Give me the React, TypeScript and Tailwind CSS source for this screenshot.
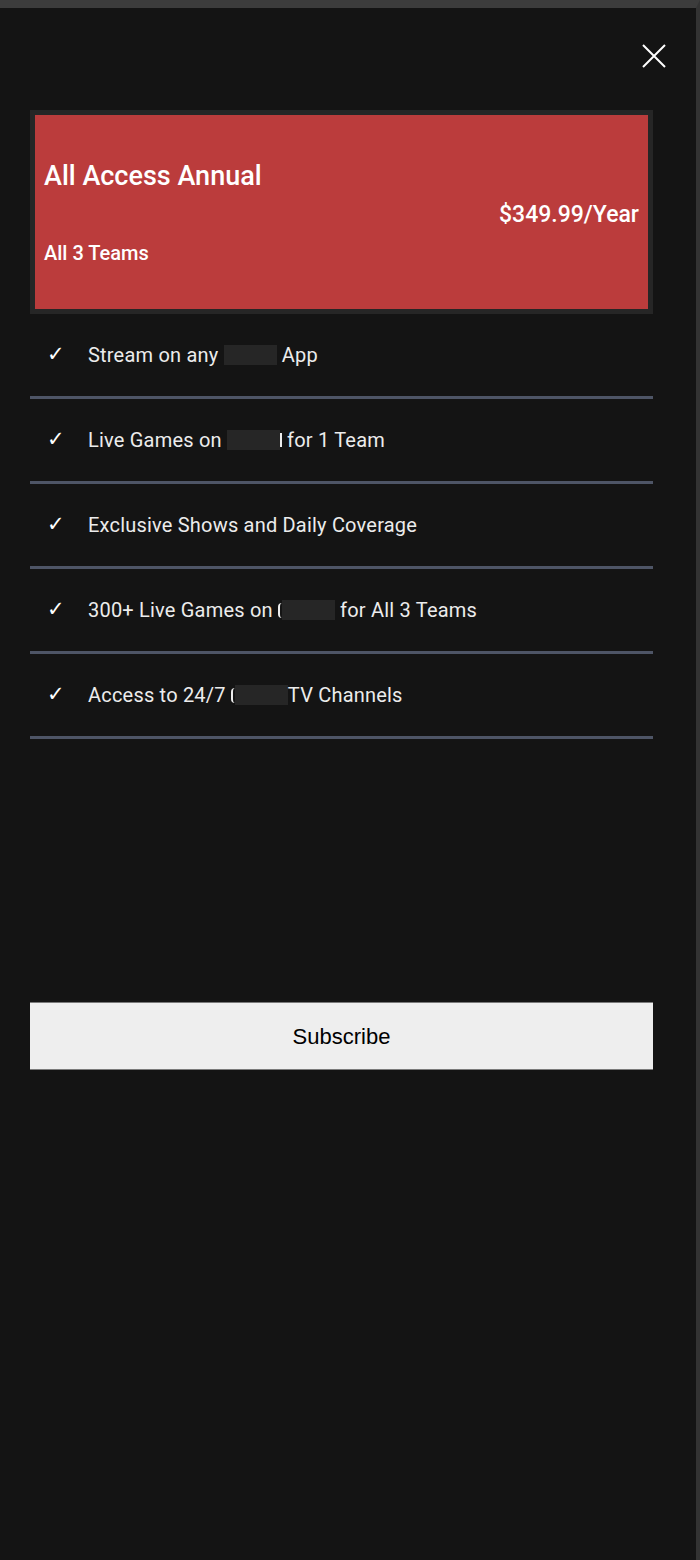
const features: { before: string; after: string; redacted?: boolean; pre?: boolean; post?: boolean }[] = [
  { before: "Stream on any ", after: " App", redacted: true },
  { before: "Live Games on ", after: " for 1 Team", redacted: true, post: true },
  { before: "Exclusive Shows and Daily Coverage", after: "" },
  { before: "300+ Live Games on ", after: " for All 3 Teams", redacted: true, pre: true },
  { before: "Access to 24/7 ", after: "TV Channels", redacted: true, pre: true },
];

function Redacted() {
  return <span className="inline-block w-[53px] h-[20px] bg-[#262626] align-[-4px]" />;
}

export default function App() {
  return (
    <div className="min-h-[1560px] bg-[#141414] border-t-[8px] border-r-[4px] border-t-[#3c3c3c] border-r-[#333333] font-['Roboto',sans-serif]">
      {/* Close */}
      <div className="flex justify-end pt-[36px] pr-[30px]">
        <button className="w-[24px] h-[24px] text-white">
          <svg viewBox="0 0 24 24" width="24" height="24" fill="none" stroke="currentColor" strokeWidth="2">
            <path d="M1 1 L23 23 M23 1 L1 23" />
          </svg>
        </button>
      </div>

      <div className="ml-[30px] w-[623px]">
        {/* Plan card */}
        <div className="mt-[42px] border-[5px] border-[#262626] bg-[#bb3c3c] text-white px-[9px] pt-[46px] pb-[44px] flex flex-col">
          <h2 className="text-[27px] leading-[30px] font-medium">All Access Annual</h2>
          <p className="mt-[11px] text-[23px] leading-[26px] font-medium text-right">$349.99/Year</p>
          <p className="mt-[13px] text-[20px] leading-[24px] font-medium">All 3 Teams</p>
        </div>

        {/* Features */}
        <ul>
          {features.map((f, i) => (
            <li key={i} className="h-[85px] border-b-[3px] border-[#4e5566] flex items-center text-[#ececec] text-[20px] tracking-[0.2px]">
              <span className="w-[58px] pl-[17px] text-white font-['DejaVu_Sans',sans-serif] text-[21px]">✓</span>
              <span className="whitespace-pre flex items-center">
                {f.before}
                {f.pre && <span className="inline-block w-[4px] h-[15px] border-l-2 border-[#ececec] rounded-l-full" />}
                {f.redacted && <Redacted />}
                {f.post && <span className="inline-block w-[2px] h-[14px] bg-[#ececec]" />}
                {f.after}
              </span>
            </li>
          ))}
        </ul>

        <button className="mt-[263px] w-full h-[68px] bg-[#eeeeee] border-y border-[#7a7a7a] text-black text-[22px] font-['Liberation_Sans',Arial,sans-serif]">
          Subscribe
        </button>
      </div>
    </div>
  );
}
